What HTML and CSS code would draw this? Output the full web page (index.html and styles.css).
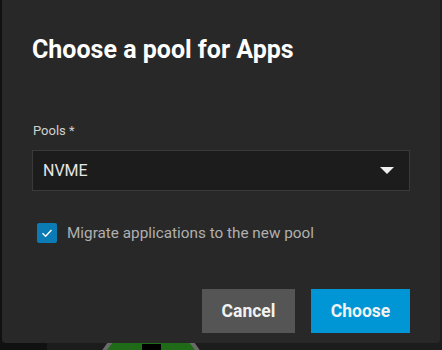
FILE: index.html
```html
<!DOCTYPE html>
<html lang="en">

<head>
    <meta charset="UTF-8">
    <title>Choose a pool for Apps</title>
    <link rel="stylesheet" href="styles.css">
</head>

<body>

    <!-- page behind the dialog -->
    <div class="page">
        <div class="sidebar"></div>
        <div class="content">
            <div class="app-icon"><span class="app-icon-bar"></span></div>
        </div>
    </div>

    <div class="dialog">
        <h1 class="dialog-title">Choose a pool for Apps</h1>

        <div class="field">
            <label class="field-label">Pools *</label>
            <div class="select">
                <span class="select-value">NVME</span>
                <span class="select-arrow"></span>
            </div>
        </div>

        <label class="checkbox-row">
            <span class="checkbox">
                <svg width="14" height="14" viewBox="0 0 14 14">
                    <path d="M2.5 7.2 L5.6 10.2 L11.5 4" fill="none" stroke="#fff" stroke-width="1.4"/>
                </svg>
            </span>
            <span class="checkbox-label">Migrate applications to the new pool</span>
        </label>

        <div class="actions">
            <button class="btn btn-cancel">Cancel</button>
            <button class="btn btn-primary">Choose</button>
        </div>
    </div>

</body>

</html>
```

FILE: styles.css
```css
body {
    margin: 0;
    background-color: #111;
    font-family: Roboto, "Liberation Sans", Arial, sans-serif;
    overflow: hidden;
}

/* page behind */
.page {
    display: flex;
    height: 350px;
    overflow: hidden;
}

.sidebar {
    width: 47px;
    background-color: #111;
}

.content {
    flex: 1;
    background-color: #1c1c1c;
    padding: 322px 0 0 48px;
    overflow: hidden;
}

.app-icon {
    width: 104px;
    height: 104px;
    border-radius: 50%;
    border: 4px solid #6a6a6a;
    background-color: #1f6b18;
    position: relative;
}

.app-icon-bar {
    position: absolute;
    left: 43px;
    top: 18px;
    width: 19px;
    height: 12px;
    background-color: #000;
}

/* The dialog */
.dialog {
    position: fixed;
    left: 2px;
    top: -10px;
    width: 438px;
    height: 353px;
    box-sizing: border-box;
    padding: 45px 30px 0 30px;
    background-color: #282828;
    border-radius: 4px;
    display: flex;
    flex-direction: column;
}

.dialog-title {
    margin: 0;
    font-size: 25px;
    font-weight: 700;
    line-height: 30px;
    color: #fff;
}

.field {
    margin-top: 58px;
}

.field-label {
    display: block;
    font-size: 13px;
    line-height: 16px;
    color: #d0d0d0;
    margin-left: 1px;
}

.select {
    margin-top: 11px;
    width: 378px;
    height: 41px;
    box-sizing: border-box;
    border: 1px solid #3a3a3a;
    background-color: #1c1c1c;
    display: flex;
    align-items: center;
    justify-content: space-between;
    padding: 0 15px 0 10px;
}

.select-value {
    font-size: 16px;
    color: #e6e6e6;
}

.select-arrow {
    width: 0;
    height: 0;
    border-left: 7px solid transparent;
    border-right: 7px solid transparent;
    border-top: 7px solid #eee;
}

.checkbox-row {
    margin-top: 32px;
    margin-left: 5px;
    display: flex;
    align-items: center;
    gap: 10px;
}

.checkbox {
    width: 20px;
    height: 20px;
    border-radius: 2px;
    background-color: #0b7bb5;
    display: flex;
    align-items: center;
    justify-content: center;
}

.checkbox-label {
    font-size: 15.3px;
    color: #b0b0b0;
}

.actions {
    margin-top: 46px;
    display: flex;
    justify-content: flex-end;
    gap: 16px;
}

.btn {
    height: 44px;
    border: none;
    border-radius: 0;
    font-family: inherit;
    font-size: 17.5px;
    font-weight: 700;
    color: #f2f2f2;
    cursor: pointer;
}

.btn-cancel {
    width: 93px;
    background-color: #555;
}

.btn-primary {
    width: 99px;
    background-color: #0095d5;
}
```
